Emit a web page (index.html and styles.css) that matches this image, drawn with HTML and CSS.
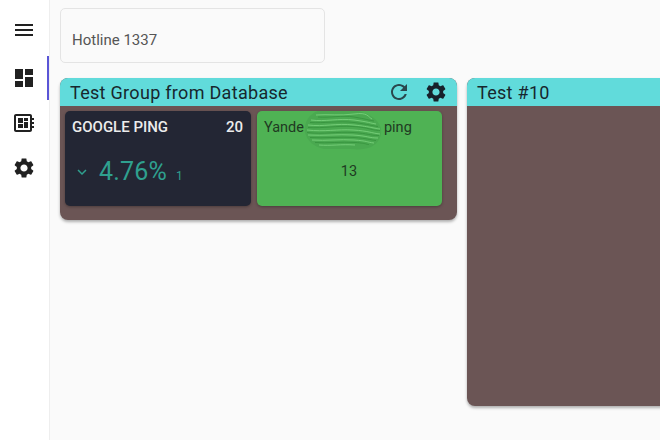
FILE: index.html
```html
<!DOCTYPE html>
<html lang="en">
<head>
    <meta charset="UTF-8">
    <meta name="viewport" content="width=device-width, initial-scale=1.0">
    <title>Dashboard</title>
    <link rel="stylesheet" href="styles.css">
</head>
<body>
    <nav class="sidebar">
        <div class="nav-menu">
            <svg class="icon" viewBox="0 0 24 24"><path d="M3 18h18v-2H3v2zm0-5h18v-2H3v2zm0-7v2h18V6H3z"/></svg>
        </div>
        <div class="nav-item active">
            <svg class="icon" viewBox="0 0 24 24"><path d="M3 13h8V3H3v10zm0 8h8v-6H3v6zm10 0h8V11h-8v10zm0-18v6h8V3h-8z"/></svg>
        </div>
        <div class="nav-item">
            <svg class="icon" viewBox="0 0 24 24"><path d="M22 9V7h-2V5c0-1.1-.9-2-2-2H4c-1.1 0-2 .9-2 2v14c0 1.1.9 2 2 2h14c1.1 0 2-.9 2-2v-2h2v-2h-2v-2h2v-2h-2V9h2zm-4 10H4V5h14v14zM6 13h5v4H6zm6-6h4v3h-4zM6 7h5v5H6zm6 4h4v6h-4z"/></svg>
        </div>
        <div class="nav-item">
            <svg class="icon" viewBox="0 0 24 24"><path d="M19.14 12.94c.04-.3.06-.61.06-.94 0-.32-.02-.64-.07-.94l2.03-1.58c.18-.14.23-.41.12-.61l-1.92-3.32c-.12-.22-.37-.29-.59-.22l-2.39.96c-.5-.38-1.03-.7-1.62-.94L14.4 2.81c-.04-.24-.24-.41-.48-.41h-3.84c-.24 0-.43.17-.47.41L9.25 5.35c-.59.24-1.13.57-1.62.94l-2.39-.96c-.22-.08-.47 0-.59.22L2.74 8.87c-.12.21-.08.47.12.61l2.03 1.58c-.05.3-.09.63-.09.94s.02.64.07.94l-2.03 1.58c-.18.14-.23.41-.12.61l1.92 3.32c.12.22.37.29.59.22l2.39-.96c.5.38 1.03.7 1.62.94l.36 2.54c.05.24.24.41.48.41h3.84c.24 0 .44-.17.47-.41l.36-2.54c.59-.24 1.13-.56 1.62-.94l2.39.96c.22.08.47 0 .59-.22l1.92-3.32c.12-.22.07-.47-.12-.61l-2.01-1.58zM12 15.6c-1.98 0-3.6-1.62-3.6-3.6s1.62-3.6 3.6-3.6 3.6 1.62 3.6 3.6-1.62 3.6-3.6 3.6z"/></svg>
        </div>
    </nav>

    <main class="content">
        <div class="hotline">Hotline 1337</div>

        <div class="groups">
            <section class="group group-short">
                <header class="group-head">
                    <h2>Test Group from Database</h2>
                    <svg class="icon icon-soft" viewBox="0 0 24 24"><path d="M17.65 6.35C16.2 4.9 14.21 4 12 4c-4.42 0-7.99 3.58-7.99 8s3.57 8 7.99 8c3.73 0 6.84-2.55 7.73-6h-2.08c-.82 2.33-3.04 4-5.65 4-3.31 0-6-2.69-6-6s2.69-6 6-6c1.66 0 3.14.69 4.22 1.78L13 11h7V4l-2.35 2.35z"/></svg>
                    <svg class="icon" viewBox="0 0 24 24"><path d="M19.14 12.94c.04-.3.06-.61.06-.94 0-.32-.02-.64-.07-.94l2.03-1.58c.18-.14.23-.41.12-.61l-1.92-3.32c-.12-.22-.37-.29-.59-.22l-2.39.96c-.5-.38-1.03-.7-1.62-.94L14.4 2.81c-.04-.24-.24-.41-.48-.41h-3.84c-.24 0-.43.17-.47.41L9.25 5.35c-.59.24-1.13.57-1.62.94l-2.39-.96c-.22-.08-.47 0-.59.22L2.74 8.87c-.12.21-.08.47.12.61l2.03 1.58c-.05.3-.09.63-.09.94s.02.64.07.94l-2.03 1.58c-.18.14-.23.41-.12.61l1.92 3.32c.12.22.37.29.59.22l2.39-.96c.5.38 1.03.7 1.62.94l.36 2.54c.05.24.24.41.48.41h3.84c.24 0 .44-.17.47-.41l.36-2.54c.59-.24 1.13-.56 1.62-.94l2.39.96c.22.08.47 0 .59-.22l1.92-3.32c.12-.22.07-.47-.12-.61l-2.01-1.58zM12 15.6c-1.98 0-3.6-1.62-3.6-3.6s1.62-3.6 3.6-3.6 3.6 1.62 3.6 3.6-1.62 3.6-3.6 3.6z"/></svg>
                </header>
                <div class="group-body">
                    <div class="card card-dark">
                        <div class="card-top">
                            <span>GOOGLE PING</span>
                            <span>20</span>
                        </div>
                        <div class="stat">
                            <svg class="chevron" viewBox="0 0 24 24"><path d="M16.59 8.59L12 13.17 7.41 8.59 6 10l6 6 6-6z"/></svg>
                            <span class="stat-value">4.76%</span>
                            <span class="stat-count">1</span>
                        </div>
                    </div>
                    <div class="card card-green">
                        <div class="card-name">
                            <span>Yande</span>
                            <svg class="smudge" viewBox="0 0 80 40">
                                <path class="smudge-base" d="M14 1h38c10 1 22 7 25 17 1 8-2 15-10 19-5 2-12 3-20 2H20C10 37 3 31 1 22 0 12 5 4 14 1z"/>
                                <path class="smudge-light" d="M12 5c12-1 24 1 38-1s14 3 18 5M7 10c14 2 28-2 43 0s16 3 22 4M4 15c16 2 28-2 46 0s18 3 26 4M3 20c18 2 30-1 46 0s18 3 27 4M4 25c16 1 30-1 45 0s16 3 25 3M8 30c14 1 28-1 42 0s12 2 20 3M15 35c12 1 22-1 36 0"/>
                                <path class="smudge-dark" d="M14 7c12 1 24-2 36 0s14 3 20 4M6 12.500c14 1 28-2 44 0s16 3 24 4M4 17.500c16 1 28-2 45-1s18 4 27 4M3 22.500c16 2 30-1 46 0s16 3 26 3M6 27.500c14 1 30-1 44 0s14 2 22 3M11 32.500c12 1 26-1 40 0s10 2 14 2"/>
                            </svg>
                            <span>ping</span>
                        </div>
                        <div class="card-number">13</div>
                    </div>
                </div>
            </section>

            <section class="group group-tall">
                <header class="group-head">
                    <h2>Test #10</h2>
                </header>
                <div class="group-body"></div>
            </section>
        </div>
    </main>
</body>
</html>
```

FILE: styles.css
```css
* {
    box-sizing: border-box;
}
html, body {
    height: 100%;
}
body {
    display: flex;
    margin: 0;
    overflow: hidden;
    font-family: Roboto, "Liberation Sans", sans-serif;
    background: #fafafa;
    color: #212121;
}
.icon {
    display: block;
    width: 24px;
    height: 24px;
    fill: #17212b;
}
.icon-soft {
    fill: #2a474e;
}
.sidebar {
    flex: 0 0 50px;
    padding-top: 8px;
    background: #fff;
    border-right: 1px solid #eeeeee;
}
.sidebar .icon {
    fill: #212121;
}
.nav-menu {
    display: flex;
    justify-content: center;
    align-items: center;
    height: 44px;
    margin-bottom: 4px;
    border-right: 2px solid transparent;
}
.nav-item {
    display: flex;
    justify-content: center;
    align-items: center;
    height: 45px;
    border-right: 2px solid transparent;
}
.nav-item.active {
    height: 44px;
    border-right-color: #5a55d6;
}
.content {
    flex: 1;
    min-width: 0;
    padding: 8px 0 0 10px;
}
.hotline {
    display: flex;
    align-items: flex-end;
    width: 265px;
    height: 55px;
    padding: 0 11px 13px;
    font-size: 15px;
    color: #555;
    background: #fafafa;
    border: 1px solid #e4e4e4;
    border-radius: 5px;
}
.groups {
    display: flex;
    align-items: flex-start;
    gap: 10px;
    margin-top: 15px;
}
.group {
    display: flex;
    flex: 0 0 397px;
    flex-direction: column;
    overflow: hidden;
    background: #6b5555;
    border-radius: 8px;
    box-shadow: 0 2px 3px rgba(0, 0, 0, 0.3);
}
.group-short {
    height: 142px;
}
.group-tall {
    height: 328px;
}
.group-head {
    display: flex;
    align-items: center;
    gap: 13px;
    height: 28px;
    padding: 0 9px 0 10px;
    background: #61dbdb;
}
.group-head h2 {
    flex: 1;
    margin: 0;
    font-size: 18px;
    font-weight: 400;
    letter-spacing: 0.3px;
    color: #17272e;
}
.group-body {
    display: flex;
    flex: 1;
    gap: 6px;
    padding: 5px 14px 14px 5px;
}
.card {
    border-radius: 5px;
    box-shadow: 0 1px 3px rgba(0, 0, 0, 0.3);
    font-size: 15px;
}
.card-dark {
    flex: 0 0 186px;
    padding: 8px 8px 0 7px;
    background: #232634;
    color: #ececec;
}
.card-top {
    display: flex;
    justify-content: space-between;
    font-weight: 500;
    line-height: 17px;
}
.stat {
    display: flex;
    align-items: baseline;
    margin-top: 21px;
    color: #2fa08f;
}
.chevron {
    flex: none;
    align-self: center;
    width: 18px;
    height: 18px;
    margin-left: 1px;
    margin-right: 8px;
    fill: #2fa08f;
}
.stat-value {
    font-size: 25px;
    letter-spacing: 0.2px;
}
.stat-count {
    margin-left: 9px;
    font-size: 12px;
}
.card-green {
    flex: 0 0 185px;
    padding: 8px 8px 0 7px;
    font-size: 14.5px;
    background: #4fb254;
    color: #1f3a22;
}
.card-name {
    display: flex;
    align-items: flex-start;
    line-height: 17px;
}
.smudge {
    flex: none;
    width: 80px;
    height: 40px;
    margin: -9px 0 -14px;
}
.smudge-base {
    fill: #4aa950;
}
.smudge-light {
    fill: none;
    stroke: #7fd681;
    stroke-width: 0.8;
}
.smudge-dark {
    fill: none;
    stroke: #35913c;
    stroke-width: 0.8;
}
.card-number {
    margin-top: 27px;
    line-height: 17px;
    text-align: center;
}
```
